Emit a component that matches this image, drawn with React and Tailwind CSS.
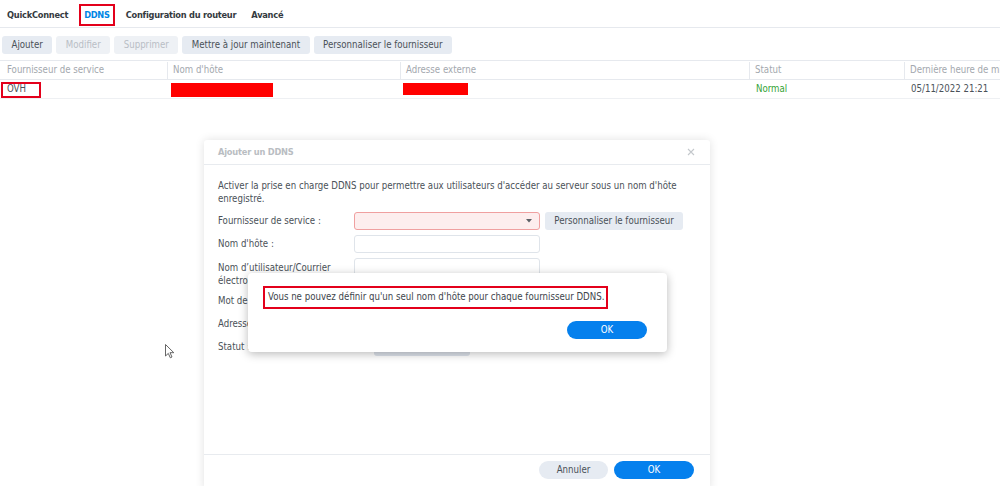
import React from "react";

const font = { fontFamily: '"DejaVu Sans Condensed", "Liberation Sans", sans-serif' };

function Btn({ children, disabled }) {
  return (
    <div
      className={
        "h-[18px] px-[9.5px] rounded-[3px] flex items-center leading-none " +
        (disabled ? "bg-[#eef1f5] text-[#b9bec5]" : "bg-[#e6ebf2] text-[#4a5158]")
      }
    >
      {children}
    </div>
  );
}

export default function App() {
  return (
    <div
      className="relative w-[1000px] h-[486px] overflow-hidden bg-white text-[9.6px] text-[#4a5158]"
      style={font}
    >
      {/* Tabs */}
      <div className="h-[28px] flex items-center pt-[3px] gap-[15px] pl-[7px] border-b border-[#e6e9ee] font-bold text-[9.2px] tracking-[-0.25px] text-[#343a40]">
        <span>QuickConnect</span>
        <span className="text-[#0086e5] outline-2 outline-[#e3001b] outline-offset-[2px] px-[1px]">DDNS</span>
        <span>Configuration du routeur</span>
        <span>Avancé</span>
      </div>

      {/* Toolbar */}
      <div className="mt-[8px] pl-[2px] flex gap-[4px]">
        <Btn>Ajouter</Btn>
        <Btn disabled>Modifier</Btn>
        <Btn disabled>Supprimer</Btn>
        <Btn>Mettre à jour maintenant</Btn>
        <Btn>Personnaliser le fournisseur</Btn>
      </div>

      {/* Table */}
      <div className="mt-[6px]">
        <div className="h-[20px] flex border-t border-b border-[#e6e9ee] text-[#a3a8ae] pt-[1px]">
          <div className="w-[168px] pl-[7px] flex items-center border-r border-[#e6e9ee]">Fournisseur de service</div>
          <div className="w-[233px] pl-[5px] flex items-center border-r border-[#e6e9ee]">Nom d'hôte</div>
          <div className="w-[349px] pl-[5px] flex items-center border-r border-[#e6e9ee]">Adresse externe</div>
          <div className="w-[155px] pl-[5px] flex items-center border-r border-[#e6e9ee]">Statut</div>
          <div className="flex-1 pl-[5px] flex items-center whitespace-nowrap overflow-hidden">Dernière heure de mise à jour</div>
        </div>
        <div className="h-[19px] flex border-b border-[#eef0f3] pt-[1px]">
          <div className="w-[168px] pl-[1px] flex items-center">
            <div className="w-[40px] h-[16px] border-2 border-[#e3001b] flex items-center pl-[4px]">OVH</div>
          </div>
          <div className="w-[233px] pl-[3px] flex items-center">
            <div className="w-[102px] h-[14px] bg-[#ff0000]" />
          </div>
          <div className="w-[349px] pl-[2px] flex items-center">
            <div className="w-[65px] h-[12px] bg-[#ff0000] -mt-[2px]" />
          </div>
          <div className="w-[155px] pl-[6px] flex items-center text-[#36a336]">Normal</div>
          <div className="flex-1 pl-[6px] flex items-center">05/11/2022 21:21</div>
        </div>
      </div>

      {/* Dialog: Ajouter un DDNS */}
      <div className="absolute left-[204px] top-[140px] w-[506px] h-[350px] bg-white rounded-[3px] shadow-[0_0_10px_rgba(0,0,0,0.12)] flex flex-col">
        <div className="h-[25px] border-b border-[#e8ebef] flex items-center justify-between pl-[14px] pr-[15px]">
          <span className="font-bold text-[#b9bdc2] text-[9.2px] tracking-[-0.2px]">Ajouter un DDNS</span>
          <svg width="8" height="8" viewBox="0 0 8 8" className="text-[#c4c8cc]">
            <path d="M1 1L7 7M7 1L1 7" stroke="currentColor" strokeWidth="1.1" />
          </svg>
        </div>
        <div className="flex-1 pl-[14px] pr-[12px] pt-[14px]">
          <p className="leading-[13px]">
            Activer la prise en charge DDNS pour permettre aux utilisateurs d'accéder au serveur sous un nom d'hôte enregistré.
          </p>
          <div className="mt-[7px] flex flex-col gap-[5px]">
            <div className="flex items-start h-[18px]">
              <div className="w-[136px] leading-[18px]">Fournisseur de service :</div>
              <div className="w-[186px] h-[18px] rounded-[3px] border border-[#f0a0a0] bg-[#fdeeee] flex items-center justify-end pr-[7px]">
                <svg width="6" height="4" viewBox="0 0 6 4"><path d="M0 0H6L3 3.5Z" fill="#5a6066" /></svg>
              </div>
              <div className="ml-[5px] w-[138px] h-[18px] rounded-[3px] bg-[#e6ebf2] flex items-center justify-center">Personnaliser le fournisseur</div>
            </div>
            <div className="flex items-start h-[18px]">
              <div className="w-[136px] leading-[18px]">Nom d'hôte :</div>
              <div className="w-[186px] h-[18px] rounded-[3px] border border-[#dfe4ea]" />
            </div>
            <div className="flex items-start h-[30px]">
              <div className="w-[136px] leading-[13px] pt-[2.5px]">Nom d’utilisateur/Courrier électronique :</div>
              <div className="w-[186px] h-[18px] rounded-[3px] border border-[#dfe4ea]" />
            </div>
            <div className="flex items-start h-[18px] -mt-[1px]">
              <div className="w-[136px] leading-[18px]">Mot de passe :</div>
              <div className="w-[186px] h-[18px] rounded-[3px] border border-[#dfe4ea]" />
            </div>
            <div className="flex items-start h-[18px]">
              <div className="w-[136px] leading-[18px]">Adresse externe :</div>
              <div className="w-[186px] leading-[18px]">-</div>
            </div>
            <div className="flex items-start h-[18px]">
              <div className="w-[136px] leading-[18px]">Statut :</div>
              <div className="ml-[20px] w-[96px] h-[18px] rounded-[3px] bg-[#dde3eb]" />
            </div>
          </div>
        </div>
        <div className="h-[36px] border-t border-[#e8ebef] flex justify-end items-start pt-[6px] pr-[16px] gap-[6px]">
          <div className="w-[69px] h-[18px] rounded-full bg-[#e6ebf2] flex items-center justify-center text-[#4a5158]">Annuler</div>
          <div className="w-[80px] h-[18px] rounded-full bg-[#0580ed] flex items-center justify-center text-white">OK</div>
        </div>
      </div>

      {/* Alert */}
      <div className="absolute left-[248px] top-[273px] w-[419px] h-[79px] bg-white rounded-[4px] shadow-[0_2px_10px_rgba(0,0,0,0.28)] pt-[13px] pl-[15px] pr-[20px]">
        <div className="inline-flex items-center h-[23px] border-2 border-[#e3001b] pl-[3px] pr-[2px] whitespace-nowrap text-[#3e454c]">
          Vous ne pouvez définir qu'un seul nom d'hôte pour chaque fournisseur DDNS.
        </div>
        <div className="mt-[12px] flex justify-end">
          <div className="w-[80px] h-[18px] rounded-full bg-[#0580ed] flex items-center justify-center text-white">OK</div>
        </div>
      </div>

      {/* Mouse cursor */}
      <svg className="absolute left-[165px] top-[344px]" width="11" height="15" viewBox="0 0 11 15">
        <path d="M0.5 0.5V12L3.3 9.4L5.3 13.8L7 13L5 8.7H8.8Z" fill="white" stroke="#555" strokeWidth="0.9" strokeLinejoin="round" />
      </svg>
    </div>
  );
}
